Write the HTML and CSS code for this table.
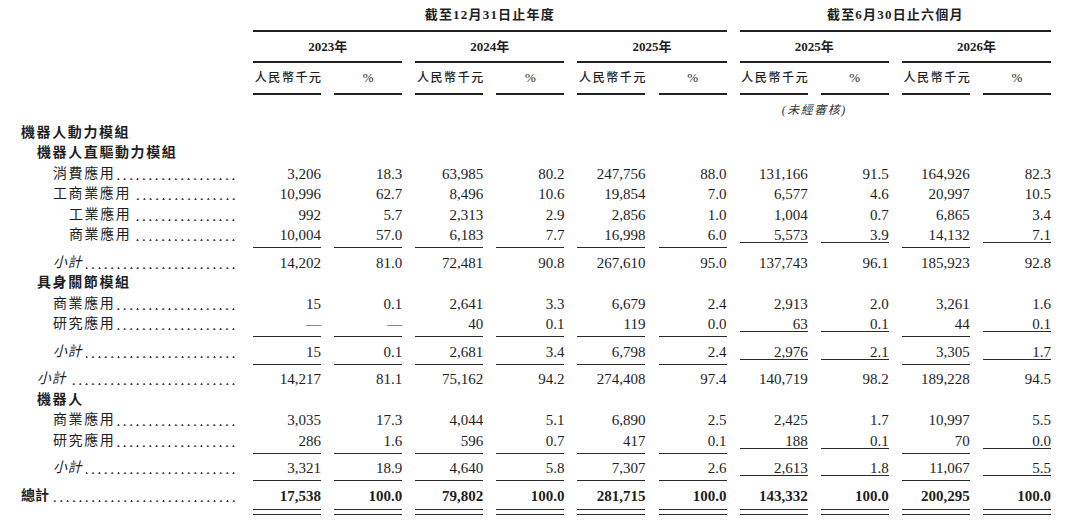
FILE: index.html
```html
<!DOCTYPE html>
<html lang="zh-Hant">
<head>
<meta charset="utf-8">
<title>收益明細</title>
<link rel="stylesheet" href="styles.css">
</head>
<body>
<div class="sheet">
  <div class="row hrow h-title">
    <span></span>
    <span class="hc span6">截至12月31日止年度</span>
    <span class="hc span4">截至6月30日止六個月</span>
  </div>
  <div class="row hrow h-year">
    <span></span>
    <span class="hc span2">2023年</span>
    <span class="hc span2">2024年</span>
    <span class="hc span2">2025年</span>
    <span class="hc span2">2025年</span>
    <span class="hc span2">2026年</span>
  </div>
  <div class="row hrow h-unit">
    <span></span>
    <span class="hc u">人民幣千元</span><span class="hc pct">%</span>
    <span class="hc u">人民幣千元</span><span class="hc pct">%</span>
    <span class="hc u">人民幣千元</span><span class="hc pct">%</span>
    <span class="hc u">人民幣千元</span><span class="hc pct">%</span>
    <span class="hc u">人民幣千元</span><span class="hc pct">%</span>
  </div>
  <div class="row h-note">
    <span></span>
    <span class="note">(未經審核)</span>
  </div>

  <div class="body">
    <div class="row r"><div class="lab l0 b"><span class="t">機器人動力模組</span></div></div>
    <div class="row r"><div class="lab l1 b"><span class="t">機器人直驅動力模組</span></div></div>
    <div class="row r"><div class="lab l2"><span class="t">消費應用</span><span class="dots"></span></div>
      <span class="n">3,206</span><span class="n">18.3</span><span class="n">63,985</span><span class="n">80.2</span><span class="n">247,756</span><span class="n">88.0</span><span class="n">131,166</span><span class="n">91.5</span><span class="n">164,926</span><span class="n">82.3</span></div>
    <div class="row r"><div class="lab l2"><span class="t">工商業應用</span><span class="dots sp"></span></div>
      <span class="n">10,996</span><span class="n">62.7</span><span class="n">8,496</span><span class="n">10.6</span><span class="n">19,854</span><span class="n">7.0</span><span class="n">6,577</span><span class="n">4.6</span><span class="n">20,997</span><span class="n">10.5</span></div>
    <div class="row r"><div class="lab l3"><span class="t">工業應用</span><span class="dots sp"></span></div>
      <span class="n">992</span><span class="n">5.7</span><span class="n">2,313</span><span class="n">2.9</span><span class="n">2,856</span><span class="n">1.0</span><span class="n">1,004</span><span class="n">0.7</span><span class="n">6,865</span><span class="n">3.4</span></div>
    <div class="row r"><div class="lab l3"><span class="t">商業應用</span><span class="dots sp"></span></div>
      <span class="n">10,004</span><span class="n">57.0</span><span class="n">6,183</span><span class="n">7.7</span><span class="n">16,998</span><span class="n">6.0</span><span class="n">5,573</span><span class="n">3.9</span><span class="n">14,132</span><span class="n">7.1</span></div>
    <div class="row rule"><span></span><i></i><i></i><i></i><i></i><i></i><i></i><i class="hi"></i><i class="hi"></i><i></i><i class="hi"></i></div>
    <div class="row r"><div class="lab l2 it"><span class="t">小計</span><span class="dots sp"></span></div>
      <span class="n">14,202</span><span class="n">81.0</span><span class="n">72,481</span><span class="n">90.8</span><span class="n">267,610</span><span class="n">95.0</span><span class="n">137,743</span><span class="n">96.1</span><span class="n">185,923</span><span class="n">92.8</span></div>
    <div class="row r"><div class="lab l1 b"><span class="t">具身關節模組</span></div></div>
    <div class="row r"><div class="lab l2"><span class="t">商業應用</span><span class="dots"></span></div>
      <span class="n">15</span><span class="n">0.1</span><span class="n">2,641</span><span class="n">3.3</span><span class="n">6,679</span><span class="n">2.4</span><span class="n">2,913</span><span class="n">2.0</span><span class="n">3,261</span><span class="n">1.6</span></div>
    <div class="row r"><div class="lab l2"><span class="t">研究應用</span><span class="dots"></span></div>
      <span class="n">—</span><span class="n">—</span><span class="n">40</span><span class="n">0.1</span><span class="n">119</span><span class="n">0.0</span><span class="n">63</span><span class="n">0.1</span><span class="n">44</span><span class="n">0.1</span></div>
    <div class="row rule"><span></span><i></i><i></i><i></i><i></i><i></i><i></i><i class="hi"></i><i class="hi"></i><i></i><i class="hi"></i></div>
    <div class="row r"><div class="lab l2 it"><span class="t">小計</span><span class="dots sp"></span></div>
      <span class="n">15</span><span class="n">0.1</span><span class="n">2,681</span><span class="n">3.4</span><span class="n">6,798</span><span class="n">2.4</span><span class="n">2,976</span><span class="n">2.1</span><span class="n">3,305</span><span class="n">1.7</span></div>
    <div class="row rule"><span></span><i></i><i></i><i></i><i></i><i></i><i></i><i class="hi"></i><i class="hi"></i><i></i><i class="hi"></i></div>
    <div class="row r"><div class="lab l1 it"><span class="t">小計</span><span class="dots sp"></span></div>
      <span class="n">14,217</span><span class="n">81.1</span><span class="n">75,162</span><span class="n">94.2</span><span class="n">274,408</span><span class="n">97.4</span><span class="n">140,719</span><span class="n">98.2</span><span class="n">189,228</span><span class="n">94.5</span></div>
    <div class="row r"><div class="lab l1 b"><span class="t">機器人</span></div></div>
    <div class="row r"><div class="lab l2"><span class="t">商業應用</span><span class="dots"></span></div>
      <span class="n">3,035</span><span class="n">17.3</span><span class="n">4,044</span><span class="n">5.1</span><span class="n">6,890</span><span class="n">2.5</span><span class="n">2,425</span><span class="n">1.7</span><span class="n">10,997</span><span class="n">5.5</span></div>
    <div class="row r"><div class="lab l2"><span class="t">研究應用</span><span class="dots"></span></div>
      <span class="n">286</span><span class="n">1.6</span><span class="n">596</span><span class="n">0.7</span><span class="n">417</span><span class="n">0.1</span><span class="n">188</span><span class="n">0.1</span><span class="n">70</span><span class="n">0.0</span></div>
    <div class="row rule"><span></span><i></i><i></i><i></i><i></i><i></i><i></i><i class="hi"></i><i class="hi"></i><i></i><i class="hi"></i></div>
    <div class="row r"><div class="lab l2 it"><span class="t">小計</span><span class="dots sp"></span></div>
      <span class="n">3,321</span><span class="n">18.9</span><span class="n">4,640</span><span class="n">5.8</span><span class="n">7,307</span><span class="n">2.6</span><span class="n">2,613</span><span class="n">1.8</span><span class="n">11,067</span><span class="n">5.5</span></div>
    <div class="row rule"><span></span><i></i><i></i><i></i><i></i><i></i><i></i><i class="hi"></i><i class="hi"></i><i></i><i class="hi"></i></div>
    <div class="row r tot"><div class="lab l0 b"><span class="t">總計</span><span class="dots sp"></span></div>
      <span class="n">17,538</span><span class="n">100.0</span><span class="n">79,802</span><span class="n">100.0</span><span class="n">281,715</span><span class="n">100.0</span><span class="n">143,332</span><span class="n">100.0</span><span class="n">200,295</span><span class="n">100.0</span></div>
    <div class="row dbl"><span></span><i></i><i></i><i></i><i></i><i></i><i></i><i></i><i></i><i></i><i></i></div>
  </div>
</div>
</body>
</html>
```

FILE: styles.css
```css
* { box-sizing: border-box; }

body {
  margin: 0;
  background: #ffffff;
  color: #1e1e1e;
  font-family: "Liberation Serif", "Noto Sans CJK TC", serif;
}

.sheet {
  width: 1067px;
  padding-top: 5px;
}

.row {
  display: grid;
  grid-template-columns: 240px repeat(10, 68px);
  column-gap: 13.1px;
}

/* ---------- header ---------- */
.hrow .hc {
  text-align: center;
  line-height: 20px;
  height: 26.5px;
  padding-bottom: 4.5px;
  border-bottom: 2px solid #222;
  white-space: nowrap;
}

.span6 { grid-column: span 6; }
.span4 { grid-column: span 4; }
.span2 { grid-column: span 2; }

.h-title .hc {
  font-size: 13px;
  font-weight: 700;
  letter-spacing: 1.2px;
}

.h-year {
  margin-top: 5px;
}

.h-year .hc {
  font-size: 13px;
  font-weight: 700;
}

.h-unit {
  margin-top: 5px;
}

.h-unit .u {
  font-size: 12px;
  font-weight: 500;
  letter-spacing: 1.6px;
  text-indent: 1.6px;
}

.h-unit .pct {
  font-size: 13px;
}

.h-note {
  margin-top: 5px;
  line-height: 20px;
  height: 20px;
}

.note {
  grid-column: 8 / span 2;
  text-align: center;
  font-size: 12px;
  font-style: italic;
  letter-spacing: 1.5px;
  color: #333;
}

/* ---------- body ---------- */
.body {
  margin-top: 3.25px;
}

.r {
  height: 20.5px;
  line-height: 20.5px;
}

.n {
  text-align: right;
  font-size: 15px;
  white-space: nowrap;
}

.tot .n {
  font-weight: 700;
}

.lab {
  display: flex;
  min-width: 0;
  padding-right: 2px;
  font-size: 14px;
  letter-spacing: 1.6px;
  font-weight: 400;
  white-space: nowrap;
}

.lab.b { font-weight: 700; }
.lab.it .t { font-style: italic; letter-spacing: 0.6px; }
.tot .lab .t { letter-spacing: 0; }

.l0 { padding-left: 21px; }
.l1 { padding-left: 37px; }
.l2 { padding-left: 53px; }
.l3 { padding-left: 69px; }

/* dot leader, drawn as a repeating pattern aligned to the right edge */
.dots {
  flex: 1;
  min-width: 0;
  background-image: radial-gradient(circle at 3.2px 15.2px, #2e2e2e 0.75px, rgba(46, 46, 46, 0) 1.2px);
  background-size: 6.4px 100%;
  background-repeat: repeat-x;
  background-position: right 1px top 0;
}

.dots.sp { margin-left: 4px; }

/* ---------- rules ---------- */
.rule {
  height: 1px;
  margin: 1.5px 0 4.5px;
}

.rule i {
  display: block;
  height: 1px;
  background: #2a2a2a;
}

.rule i.hi { margin-top: -5px; }

.dbl {
  margin-top: 2.5px;
}

.dbl i {
  display: block;
  height: 6px;
  border-top: 1px solid #2a2a2a;
  border-bottom: 1px solid #2a2a2a;
}
```
